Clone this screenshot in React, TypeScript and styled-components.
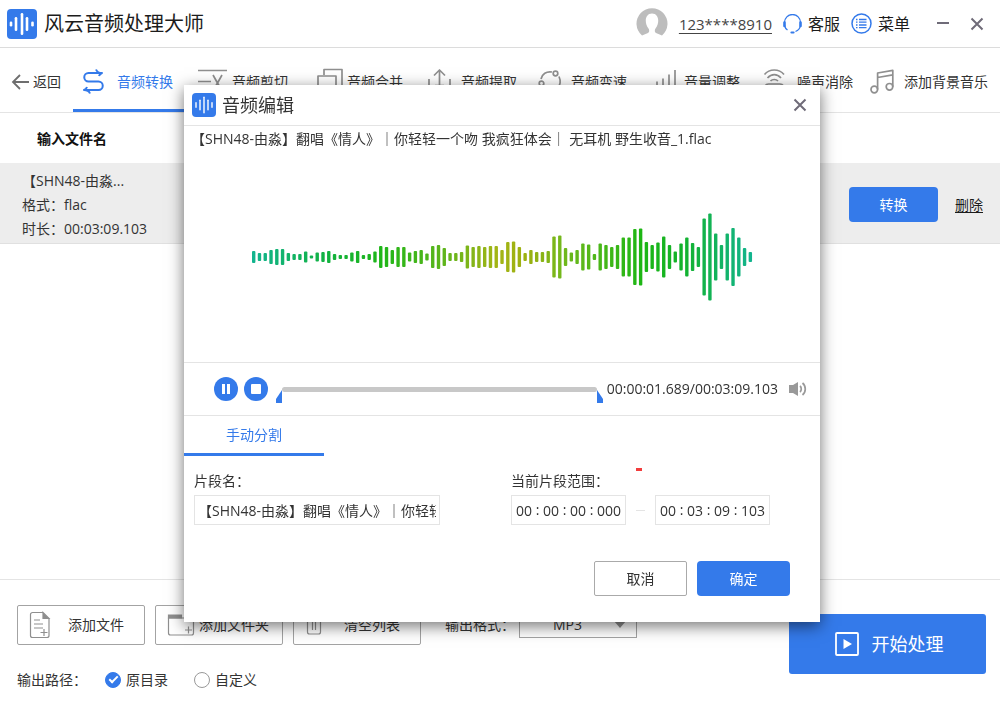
import React from "react";
import styled, { createGlobalStyle, css } from "styled-components";

const blue = "#347aea";
const line = "#e4e4e4";
const iconGrey = "#8f8f8f";

const GlobalStyle = createGlobalStyle`
  *, *::before, *::after { box-sizing: border-box; }
  body {
    margin: 0;
    background: #fff;
    color: #333;
    font: 14px/20px "Open Sans", "Noto Sans CJK SC", sans-serif;
  }
  button, input, select {
    font: inherit;
    color: inherit;
    margin: 0;
    padding: 0;
    border: 0;
    background: none;
  }
  button { cursor: pointer; white-space: nowrap; }
  a { color: inherit; }
  svg { display: block; flex: none; }
`;

/* ---------- window ---------- */

const Window = styled.div`
  display: flex;
  flex-direction: column;
  min-height: 100vh;
`;

const TitleBar = styled.header`
  display: flex;
  align-items: center;
  justify-content: space-between;
  height: 48px;
  padding: 0 16px 0 7px;
  border-bottom: 1px solid #dcdcdc;
`;

const Brand = styled.h1`
  display: flex;
  align-items: center;
  gap: 7px;
  margin: 0;
  font-size: 20px;
  font-weight: 400;
  color: #1c1c1c;
`;

const HeaderActions = styled.div`
  display: flex;
  align-items: center;
  gap: 11px;
`;

const AccountLink = styled.a`
  font-size: 15px;
  color: #444;
  text-underline-offset: 3px;
`;

const HeaderButton = styled.button`
  display: flex;
  align-items: center;
  gap: 6px;
  font-size: 16px;
  color: #1c1c1c;
`;

const WindowButtons = styled.div`
  display: flex;
  gap: 20px;
  padding-left: 15px;
`;

const IconButton = styled.button`
  display: flex;
  align-items: center;
  justify-content: center;
`;

/* ---------- tool bar ---------- */

const ToolBar = styled.nav`
  display: flex;
  height: 65px;
  border-bottom: 1px solid ${line};
`;

const BackButton = styled.button`
  display: flex;
  align-items: center;
  gap: 4px;
  width: 73px;
  padding: 3px 0 0 11px;
`;

const ToolList = styled.div`
  flex: 1;
  display: grid;
  grid-template-columns: 115fr 115fr 114fr 110fr 113fr 113fr 107fr 140fr;
`;

const Tool = styled.button<{ $active?: boolean }>`
  display: flex;
  align-items: center;
  padding: 6px 0 0 10px;
  border-bottom: 3px solid ${(p) => (p.$active ? blue : "transparent")};
  color: ${(p) => (p.$active ? blue : "#333")};
`;

const ToolIcon = styled.span`
  width: 34px;
  color: ${iconGrey};
`;

/* ---------- file table ---------- */

const FileArea = styled.main`
  flex: 1;
`;

const FileTable = styled.table`
  width: 100%;
  border-collapse: collapse;
`;

const HeadCell = styled.th`
  height: 50px;
  padding: 2px 0 0 37px;
  text-align: left;
  font-weight: 700;
  color: #111;
`;

const FileRow = styled.tr`
  height: 80px;
  background: #ededed;
  border-bottom: 1px solid #e0e0e0;
`;

const FileCell = styled.td`
  padding: 4px 0 0 22px;
  line-height: 24px;
`;

const ActionCell = styled.td`
  width: 168px;
  padding: 4px 17px 0;
`;

const ActionGroup = styled.div`
  display: flex;
  align-items: center;
  justify-content: space-between;
`;

const Button = styled.button<{ $primary?: boolean; $wide?: boolean }>`
  width: ${(p) => (p.$wide ? 93 : 89)}px;
  height: 35px;
  border-radius: ${(p) => (p.$primary ? 4 : 2)}px;
  ${(p) =>
    p.$primary
      ? css`
          background: ${blue};
          color: #fff;
        `
      : css`
          border: 1px solid #aaa;
          background: #fff;
        `}
`;

const TextButton = styled.button`
  color: #1c1c1c;
  text-decoration: underline;
  text-underline-offset: 2px;
`;

/* ---------- footer ---------- */

const Footer = styled.footer`
  display: flex;
  justify-content: space-between;
  padding: 25px 14px 16px 17px;
  border-top: 1px solid ${line};
`;

const FooterControls = styled.div`
  display: flex;
  flex-direction: column;
  gap: 25px;
`;

const FooterRow = styled.div`
  display: flex;
  align-items: center;
`;

const FileButtons = styled.div`
  display: flex;
  gap: 10px;
  margin-right: 24px;
`;

const FileButton = styled.button`
  display: flex;
  align-items: center;
  width: 128px;
  height: 40px;
  padding: 0 9px 0 11px;
  border: 1px solid #a3a3a3;
  border-radius: 2px;
`;

const FileIcon = styled.span`
  width: 28px;
  color: ${iconGrey};
`;

const FileButtonText = styled.span`
  flex: 1;
  display: flex;
  justify-content: center;
`;

const FormatLabel = styled.label`
  display: flex;
  align-items: center;
  gap: 4px;
`;

const SelectBox = styled.span`
  position: relative;

  svg {
    position: absolute;
    top: 9px;
    right: 11px;
    pointer-events: none;
  }
`;

const Select = styled.select`
  appearance: none;
  display: block;
  width: 118px;
  height: 26px;
  padding-left: 33px;
  border: 1px solid #a3a3a3;
`;

const RadioGroup = styled.fieldset`
  display: flex;
  gap: 26px;
  margin: 0;
  padding: 0;
  border: 0;
`;

const RadioLegend = styled.legend`
  float: left;
  width: 88px;
  margin-right: -26px;
  padding: 0;
`;

const RadioLabel = styled.label`
  display: flex;
  align-items: center;
  gap: 5px;
`;

const Radio = styled.input`
  appearance: none;
  display: grid;
  place-items: center;
  width: 16px;
  height: 16px;
  border: 1px solid #999;
  border-radius: 50%;

  &:checked {
    border-color: ${blue};
    background: ${blue};
  }
  &:checked::after {
    content: "";
    width: 9px;
    height: 5px;
    margin-bottom: 3px;
    border: solid #fff;
    border-width: 0 0 2px 2px;
    transform: rotate(-45deg);
  }
`;

const StartButton = styled.button`
  display: flex;
  align-items: center;
  justify-content: center;
  gap: 13px;
  width: 197px;
  height: 60px;
  padding-left: 3px;
  margin-top: 9px;
  border-radius: 3px;
  background: ${blue};
  color: #fff;
  font-size: 18px;
`;

/* ---------- dialog ---------- */

const Overlay = styled.div`
  position: fixed;
  inset: 0;
  display: flex;
  align-items: center;
  justify-content: center;
  padding: 1px 0 0 4px;
`;

const Dialog = styled.section`
  width: 636px;
  background: #fff;
  box-shadow: 0 4px 15px rgba(0, 0, 0, 0.55);
`;

const DialogBar = styled.header`
  display: flex;
  align-items: center;
  justify-content: space-between;
  height: 41px;
  padding: 0 13px 0 8px;
  border-bottom: 1px solid ${line};
`;

const DialogTitle = styled.h2`
  display: flex;
  align-items: center;
  gap: 6px;
  margin: 0;
  font-size: 18px;
  font-weight: 400;
`;

const Preview = styled.div`
  padding: 3px 0 0 7px;
  height: 236px;
`;

const TrackName = styled.p`
  margin: 0;
  white-space: nowrap;
`;

const WaveBox = styled.div`
  display: flex;
  justify-content: center;
  padding: 63px 7px 0 0;
`;

const Player = styled.div`
  display: flex;
  align-items: center;
  height: 54px;
  padding: 0 13px 0 30px;
  border: solid ${line};
  border-width: 1px 0;
`;

const PlayerButtons = styled.div`
  display: flex;
  gap: 6px;
  margin-right: 14px;
`;

const SeekBox = styled.div`
  position: relative;
  flex: 1;
  height: 5px;
`;

const Seek = styled.input`
  appearance: none;
  display: block;
  width: 100%;
  height: 5px;
  border-radius: 3px;
  background: #c8c8c8;

  &::-webkit-slider-thumb {
    appearance: none;
    width: 1px;
    height: 5px;
  }
`;

const TrimHandle = styled.svg<{ $side: "left" | "right" }>`
  position: absolute;
  top: 3px;
  ${(p) => p.$side}: -6px;
`;

const PlayTime = styled.output`
  margin: 0 11px 0 10px;
  white-space: nowrap;
`;

const DialogTab = styled.button`
  display: block;
  width: 140px;
  height: 40px;
  border-bottom: 3px solid ${blue};
  color: ${blue};
`;

const Fields = styled.div`
  display: flex;
  justify-content: space-between;
  padding: 15px 50px 0 10px;
`;

const Field = styled.div`
  position: relative;
  display: flex;
  flex-direction: column;
  gap: 4px;
`;

const NameInput = styled.input`
  width: 246px;
  height: 30px;
  padding: 0 3px;
  border: 1px solid ${line};
`;

const Range = styled.div`
  display: flex;
  align-items: center;
`;

const RangeDash = styled.span`
  width: 9px;
  height: 1px;
  margin: 0 10px;
  background: ${line};
`;

const ErrorMark = styled.i`
  position: absolute;
  top: -3px;
  left: 125px;
  width: 6px;
  height: 3px;
  background: #f23c3c;
`;

const TimeBox = styled.div`
  display: flex;
  align-items: center;
  justify-content: center;
  width: 115px;
  height: 30px;
  border: 1px solid ${line};
`;

const TimePart = styled.input<{ $digits: number }>`
  width: ${(p) => p.$digits * 8 + 1}px;
  height: 28px;
  text-align: center;
`;

const Colon = styled.span`
  width: 10px;
  text-align: center;
`;

const DialogActions = styled.div`
  display: flex;
  justify-content: flex-end;
  gap: 10px;
  padding: 36px 30px 26px;
`;

/* ---------- drawings ---------- */

const Logo = ({ size, bars, stroke }: { size: number; bars: number[][]; stroke: number }) => (
  <svg width={size} height={size} viewBox={`0 0 ${size} ${size}`} aria-hidden="true">
    <rect width={size} height={size} rx="4" fill={blue} />
    {bars.map(([x, h]) => (
      <rect key={x} x={x - stroke / 2} y={(size - h) / 2} width={stroke} height={h} rx={stroke / 2} fill="#fff" />
    ))}
  </svg>
);

const Cross = () => (
  <svg width="14" height="14" viewBox="0 0 14 14" fill="none" stroke="#6f6b78" strokeWidth="2">
    <path d="M1.5 1.5l11 11M12.5 1.5l-11 11" />
  </svg>
);

const ToolSvg = ({ children }: { children: React.ReactNode }) => (
  <svg width="30" height="28" viewBox="0 0 30 28" fill="none" stroke="currentColor" strokeWidth="1.7" strokeLinejoin="round" aria-hidden="true">
    {children}
  </svg>
);

const tools: { label: string; icon: React.ReactNode }[] = [
  {
    label: "音频转换",
    icon: (
      <g stroke={blue} strokeWidth="2">
        <path d="M19 5H5.500a4 4 0 0 0 0 8.500h10a4.200 4.200 0 0 1 0 8.500H1" />
        <path d="M13 1.500c1 2.500 3 3.500 6 3.500-1.500.5-2.500 1.500-3 3M7 25.500c-1-2.500-3-3.500-6-3.500 1.500-.5 2.500-1.500 3-3" />
      </g>
    ),
  },
  {
    label: "音频剪切",
    icon: <path d="M0 2.500h29M0 13.500h13M15 7l9 16M24 7l-9 16M12 23h4M22 23h4" />,
  },
  {
    label: "音频合并",
    icon: <path d="M11 7V1.500h18v17H24M5 8h18v16H5z" />,
  },
  {
    label: "音频提取",
    icon: <path d="M12.500 17V2.500M7 7.500L12.500 2 18 7.500M2 11v13h21V11M8 17.500h9" />,
  },
  {
    label: "音频变速",
    icon: (
      <>
        <circle cx="18.500" cy="5.500" r="2.300" />
        <circle cx="4.500" cy="15.500" r="2.300" />
        <path d="M4 11c1-5 5.500-8 11-7M22 8.500c2 4.500 1 9-1.500 12M7.500 19.500c2 3 6 4.500 9.500 3.500" />
      </>
    ),
  },
  {
    label: "音量调整",
    icon: <path d="M7 24V13.500M13 24V10.500M19 24V6.500M25 24V2" />,
  },
  {
    label: "噪声消除",
    icon: <path d="M1.500 6.500c5-6 14.500-6 19.500 0M4.500 10c4-4.500 9.500-4.500 13.500 0M7.500 13c2-2 5.500-2 7.500 0M2 18c1-1.500 2-2 3.500-2h11.500c1.500 0 2.500.5 3.500 2M6 21h10" />,
  },
  {
    label: "添加背景音乐",
    icon: (
      <>
        <circle cx="4.300" cy="21.500" r="3.300" />
        <circle cx="19.500" cy="18.800" r="3.300" />
        <path d="M7.600 21.500V5l15.200-2.700v16.500M7.600 9.500l15.200-2.700" />
      </>
    ),
  },
];

const barHeights = [
  12, 8, 8, 14, 16, 16, 8, 6, 6, 11, 3, 9, 10, 12, 6, 4, 4, 9, 12, 4, 6, 11, 22, 20, 14, 20, 20, 9, 12, 14,
  7, 22, 24, 18, 8, 8, 10, 23, 20, 22, 20, 22, 22, 14, 30, 31, 20, 8, 14, 10, 10, 12, 41, 43, 18, 9, 14, 27,
  25, 6, 27, 24, 20, 24, 39, 39, 56, 57, 30, 24, 29, 41, 24, 11, 27, 39, 28, 20, 77, 87, 47, 24, 47, 58, 39,
  18, 10,
];

const Waveform = () => (
  <svg width="502" height="90" viewBox="0 0 502 90" role="img" aria-label="波形">
    <defs>
      <linearGradient id="wave" gradientUnits="userSpaceOnUse" x1="0" y1="0" x2="502" y2="0">
        <stop offset="0" stopColor="#12b490" />
        <stop offset="0.160" stopColor="#12b23c" />
        <stop offset="0.260" stopColor="#1fb618" />
        <stop offset="0.380" stopColor="#5cb51c" />
        <stop offset="0.490" stopColor="#a3b516" />
        <stop offset="0.550" stopColor="#9cb010" />
        <stop offset="0.620" stopColor="#72b81c" />
        <stop offset="0.780" stopColor="#1cb614" />
        <stop offset="0.860" stopColor="#12b22c" />
        <stop offset="1" stopColor="#12b490" />
      </linearGradient>
    </defs>
    <g fill="url(#wave)">
      {barHeights.map((h, i) => (
        <rect key={i} x={1 + i * 5.775} y={45 - h / 2} width="3.400" height={h} rx="1" />
      ))}
    </g>
  </svg>
);

const TimeFields = ({ name, parts }: { name: string; parts: string[] }) => (
  <TimeBox role="group" aria-label={name}>
    {parts.map((part, i) => (
      <React.Fragment key={i}>
        {i > 0 && <Colon>:</Colon>}
        <TimePart $digits={part.length} defaultValue={part} aria-label={`${name} ${["时", "分", "秒", "毫秒"][i]}`} />
      </React.Fragment>
    ))}
  </TimeBox>
);

const trackName = "【SHN48-由淼】翻唱《情人》｜你轻轻一个吻 我疯狂体会｜ 无耳机 野生收音_1.flac";

export default function App() {
  return (
    <>
      <GlobalStyle />
      <Window>
        <TitleBar>
          <Brand>
            <Logo size={30} stroke={2.6} bars={[[4, 5], [9, 14], [15, 22], [20, 14], [25.5, 5]]} />
            风云音频处理大师
          </Brand>
          <HeaderActions>
            <svg width="32" height="32" viewBox="0 0 32 32" aria-hidden="true">
              <path fill="#bdbdbd" d="M6 27.500A15.500 15.500 0 1 1 26 27.500L20 25C18.500 24 18.500 22 19.500 20.500C24 15 23 5.500 16 5.500S8 15 12.500 20.500C13.500 22 13.500 24 12 25Z" />
            </svg>
            <AccountLink href="#account">123****8910</AccountLink>
            <HeaderButton>
              <svg width="19" height="20" viewBox="0 0 19 20" fill="none" stroke={blue} strokeWidth="1.300">
                <path d="M1.500 8.500a8 8 0 0 1 16 0M17.500 11.500a8 8 0 0 1-5 6M1.500 11.500c.5 2 1.500 3.500 3 4.500" />
                <path d="M1.500 8.500v3.500M17.500 8.500v3.500" strokeWidth="2.600" strokeLinecap="round" />
                <path d="M8.500 18.500h2" strokeWidth="2.200" strokeLinecap="round" />
              </svg>
              客服
            </HeaderButton>
            <HeaderButton>
              <svg width="21" height="21" viewBox="0 0 21 21" fill="none" stroke={blue} strokeWidth="1.500">
                <circle cx="10.500" cy="10.500" r="9.500" />
                <path d="M8 6.500h7.500M8 9.200h7.500M8 12h7.500M8 14.700h7.500M5 6.500h1.500M5 9.200h1.500M5 12h1.500M5 14.700h1.500" strokeWidth="1.300" />
              </svg>
              菜单
            </HeaderButton>
            <WindowButtons>
              <IconButton aria-label="最小化">
                <svg width="14" height="14" viewBox="0 0 14 14">
                  <path d="M1 6h12" stroke="#6f6b78" strokeWidth="2" />
                </svg>
              </IconButton>
              <IconButton aria-label="关闭">
                <Cross />
              </IconButton>
            </WindowButtons>
          </HeaderActions>
        </TitleBar>

        <ToolBar>
          <BackButton>
            <svg width="18" height="16" viewBox="0 0 18 16" fill="none" stroke="#6e6e6e" strokeWidth="1.800">
              <path d="M18 8H2M9 1L2 8l7 7" />
            </svg>
            返回
          </BackButton>
          <ToolList>
            {tools.map((tool, i) => (
              <Tool key={tool.label} $active={i === 0}>
                <ToolIcon>
                  <ToolSvg>{tool.icon}</ToolSvg>
                </ToolIcon>
                {tool.label}
              </Tool>
            ))}
          </ToolList>
        </ToolBar>

        <FileArea>
          <FileTable>
            <thead>
              <tr>
                <HeadCell colSpan={2}>输入文件名</HeadCell>
              </tr>
            </thead>
            <tbody>
              <FileRow>
                <FileCell>
                  <div>【SHN48-由淼...</div>
                  <div>格式：flac</div>
                  <div>时长：00:03:09.103</div>
                </FileCell>
                <ActionCell>
                  <ActionGroup>
                    <Button $primary>转换</Button>
                    <TextButton>删除</TextButton>
                  </ActionGroup>
                </ActionCell>
              </FileRow>
            </tbody>
          </FileTable>
        </FileArea>

        <Footer>
          <FooterControls>
            <FooterRow>
              <FileButtons>
                <FileButton>
                  <FileIcon>
                    <svg width="22" height="28" viewBox="0 0 22 28" fill="none" stroke="currentColor" strokeWidth="1.200">
                      <path d="M14 1.500H3.500a2 2 0 0 0-2 2v21a2 2 0 0 0 2 2H18a2 2 0 0 0 2-2V7.500M5 9h6M5 13h9M5 17h9M15 18v7M11.500 21.500h7" />
                      <path d="M14 1.500v6h6z" fill="currentColor" />
                    </svg>
                  </FileIcon>
                  <FileButtonText>添加文件</FileButtonText>
                </FileButton>
                <FileButton>
                  <FileIcon>
                    <svg width="28" height="24" viewBox="0 0 28 24" fill="none" stroke="currentColor" strokeWidth="1.200">
                      <path d="M1.500 5v15a2 2 0 0 0 2 2h21a2 2 0 0 0 2-2V7a2 2 0 0 0-2-2zM21.500 13.500v7M18 17h7" />
                      <path d="M1.500 5V2h13v3z" fill="currentColor" />
                    </svg>
                  </FileIcon>
                  <FileButtonText>添加文件夹</FileButtonText>
                </FileButton>
                <FileButton>
                  <FileIcon>
                    <svg width="22" height="24" viewBox="0 0 22 24" fill="none" stroke="currentColor" strokeWidth="1.200">
                      <path d="M0 5h18M6 5V2h6v3M2.500 5v14a2 2 0 0 0 2 2h9a2 2 0 0 0 2-2V5M7.500 9v8M10.500 9v8" />
                    </svg>
                  </FileIcon>
                  <FileButtonText>清空列表</FileButtonText>
                </FileButton>
              </FileButtons>
              <FormatLabel>
                输出格式：
                <SelectBox>
                  <Select defaultValue="MP3">
                    <option>MP3</option>
                  </Select>
                  <svg width="12" height="7" viewBox="0 0 12 7">
                    <path d="M0 0h12L6 7z" fill="#8f8f8f" />
                  </svg>
                </SelectBox>
              </FormatLabel>
            </FooterRow>
            <RadioGroup>
              <RadioLegend>输出路径：</RadioLegend>
              <RadioLabel>
                <Radio type="radio" name="output" defaultChecked />
                原目录
              </RadioLabel>
              <RadioLabel>
                <Radio type="radio" name="output" />
                自定义
              </RadioLabel>
            </RadioGroup>
          </FooterControls>
          <StartButton>
            <svg width="24" height="24" viewBox="0 0 24 24" fill="none" stroke="#fff" strokeWidth="1.800">
              <rect x="1" y="1" width="22" height="22" rx="1" />
              <path d="M8.500 7v10l8.500-5z" fill="#fff" stroke="none" />
            </svg>
            开始处理
          </StartButton>
        </Footer>
      </Window>

      <Overlay>
        <Dialog role="dialog" aria-labelledby="edit-title">
          <DialogBar>
            <DialogTitle id="edit-title">
              <Logo size={24} stroke={1.4} bars={[[4, 6], [8, 11], [12, 17], [16, 11], [20, 6]]} />
              音频编辑
            </DialogTitle>
            <IconButton aria-label="关闭">
              <Cross />
            </IconButton>
          </DialogBar>
          <Preview>
            <TrackName>{trackName}</TrackName>
            <WaveBox>
              <Waveform />
            </WaveBox>
          </Preview>
          <Player>
            <PlayerButtons>
              <IconButton aria-label="暂停">
                <svg width="24" height="24" viewBox="0 0 24 24">
                  <circle cx="12" cy="12" r="12" fill={blue} />
                  <path d="M8 7h3v10H8zM13 7h3v10h-3z" fill="#fff" />
                </svg>
              </IconButton>
              <IconButton aria-label="停止">
                <svg width="24" height="24" viewBox="0 0 24 24">
                  <circle cx="12" cy="12" r="12" fill={blue} />
                  <rect x="7" y="7" width="10" height="10" rx="1" fill="#fff" />
                </svg>
              </IconButton>
            </PlayerButtons>
            <SeekBox>
              <Seek type="range" min={0} max={189103} defaultValue={1689} aria-label="播放进度" />
              <TrimHandle $side="left" width="6" height="13" viewBox="0 0 6 13">
                <path d="M6 0v13H0V9z" fill={blue} />
              </TrimHandle>
              <TrimHandle $side="right" width="6" height="13" viewBox="0 0 6 13">
                <path d="M0 0v13h6V9z" fill={blue} />
              </TrimHandle>
            </SeekBox>
            <PlayTime>00:00:01.689/00:03:09.103</PlayTime>
            <IconButton aria-label="音量">
              <svg width="18" height="16" viewBox="0 0 18 16" fill="none" stroke="#999" strokeWidth="1.700">
                <path d="M0 4h4L9 1v14l-5-3H0z" fill="#999" stroke="none" />
                <path d="M11 5c1.700 1.500 1.700 4.500 0 6M13.500 2c3.700 3 3.700 9 0 12" />
              </svg>
            </IconButton>
          </Player>
          <DialogTab>手动分割</DialogTab>
          <Fields>
            <Field>
              <label htmlFor="clip-name">片段名：</label>
              <NameInput id="clip-name" defaultValue={trackName} />
            </Field>
            <Field>
              <span>当前片段范围：</span>
              <ErrorMark />
              <Range>
                <TimeFields name="开始" parts={["00", "00", "00", "000"]} />
                <RangeDash />
                <TimeFields name="结束" parts={["00", "03", "09", "103"]} />
              </Range>
            </Field>
          </Fields>
          <DialogActions>
            <Button $wide>取消</Button>
            <Button $wide $primary>
              确定
            </Button>
          </DialogActions>
        </Dialog>
      </Overlay>
    </>
  );
}
